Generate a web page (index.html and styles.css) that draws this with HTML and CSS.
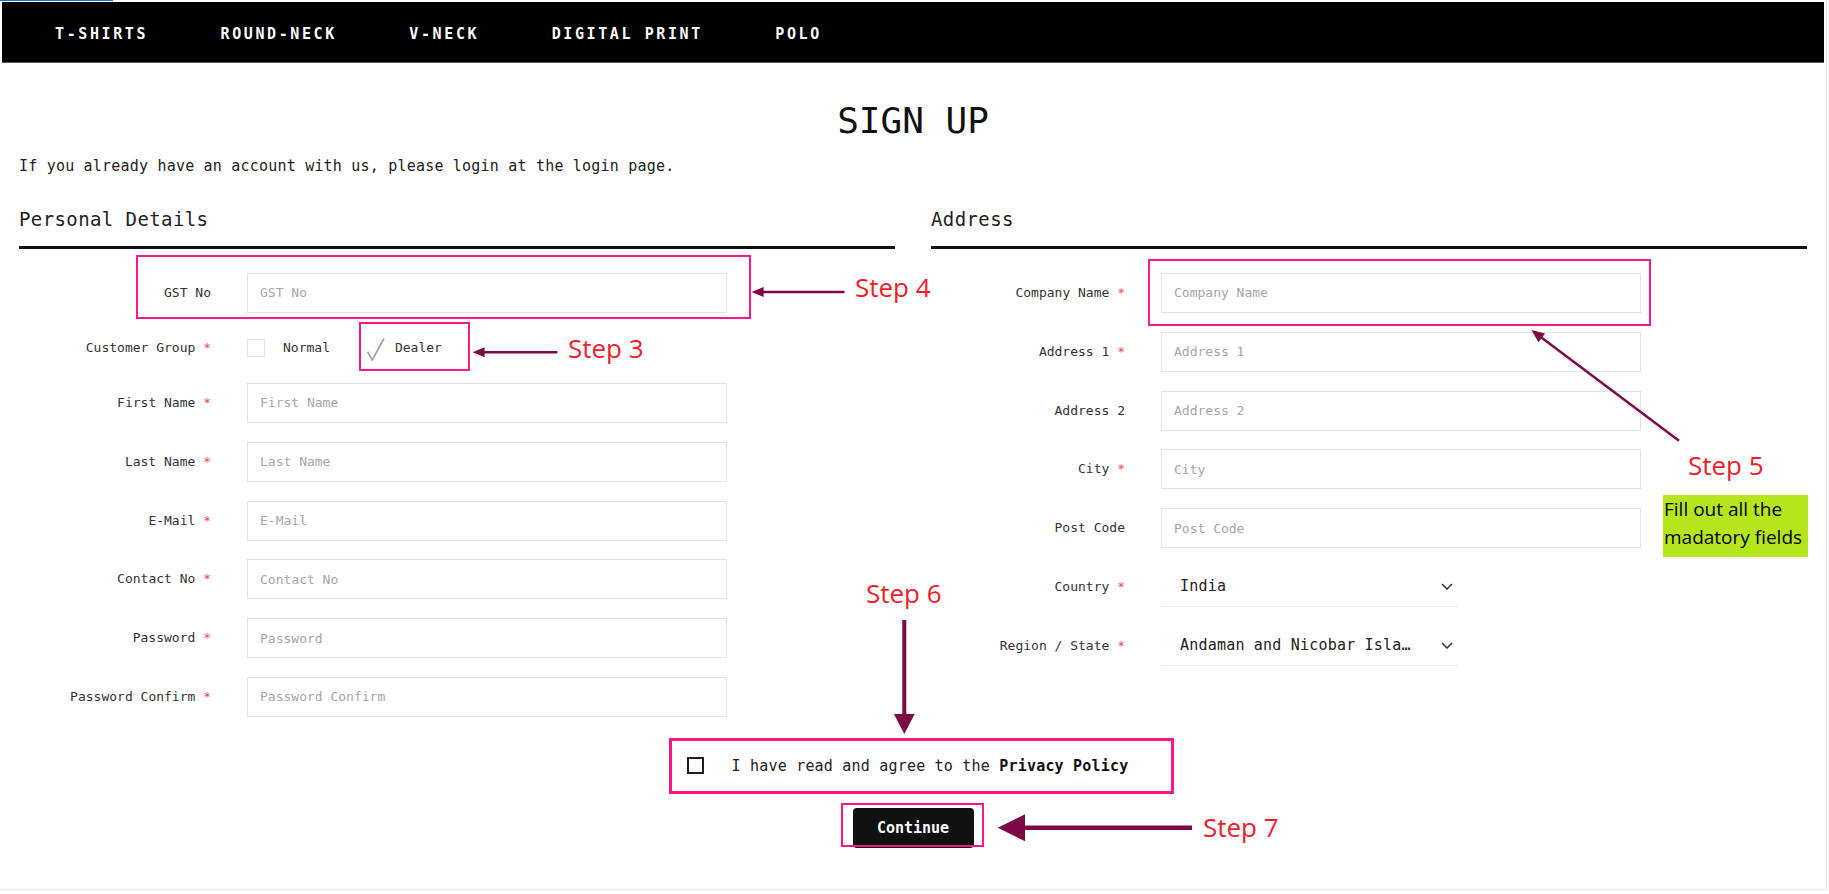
FILE: index.html
```html
<!DOCTYPE html>
<html lang="en">
<head>
<meta charset="utf-8">
<title>Sign Up</title>
<link rel="stylesheet" href="styles.css">
</head>
<body>
<div class="site">
  <div class="tabline"><span class="tab-indicator"></span></div>
  <nav class="menu">
    <a class="menu-item">T-SHIRTS</a>
    <a class="menu-item">ROUND-NECK</a>
    <a class="menu-item">V-NECK</a>
    <a class="menu-item">DIGITAL PRINT</a>
    <a class="menu-item">POLO</a>
  </nav>

  <main class="content">
    <h1 class="title">SIGN UP</h1>
    <p class="intro">If you already have an account with us, please login at the login page.</p>

    <div class="columns">
      <section class="col col-left">
        <h2 class="legend">Personal Details</h2>
        <div class="fields">
          <div class="field"><label class="lbl">GST No</label><input class="inp" placeholder="GST No"></div>
          <div class="field field-group"><label class="lbl">Customer Group <span class="req">*</span></label>
            <div class="choices">
              <span class="box"></span><span class="choice-text">Normal</span>
              <svg class="tick" width="18" height="23" viewBox="0 0 18 23"><path d="M0.5 13.7 L5.3 22 L17 0.5" fill="none" stroke="#a3a3a3" stroke-width="1.7"/></svg><span class="choice-text">Dealer</span>
            </div>
          </div>
          <div class="field"><label class="lbl">First Name <span class="req">*</span></label><input class="inp" placeholder="First Name"></div>
          <div class="field"><label class="lbl">Last Name <span class="req">*</span></label><input class="inp" placeholder="Last Name"></div>
          <div class="field"><label class="lbl">E-Mail <span class="req">*</span></label><input class="inp" placeholder="E-Mail"></div>
          <div class="field"><label class="lbl">Contact No <span class="req">*</span></label><input class="inp" placeholder="Contact No"></div>
          <div class="field"><label class="lbl">Password <span class="req">*</span></label><input class="inp" placeholder="Password"></div>
          <div class="field"><label class="lbl">Password Confirm <span class="req">*</span></label><input class="inp" placeholder="Password Confirm"></div>
        </div>
      </section>

      <section class="col col-right">
        <h2 class="legend">Address</h2>
        <div class="fields">
          <div class="field"><label class="lbl">Company Name <span class="req">*</span></label><input class="inp" placeholder="Company Name"></div>
          <div class="field"><label class="lbl">Address 1 <span class="req">*</span></label><input class="inp" placeholder="Address 1"></div>
          <div class="field"><label class="lbl">Address 2</label><input class="inp" placeholder="Address 2"></div>
          <div class="field"><label class="lbl">City <span class="req">*</span></label><input class="inp" placeholder="City"></div>
          <div class="field"><label class="lbl">Post Code</label><input class="inp" placeholder="Post Code"></div>
          <div class="field"><label class="lbl">Country <span class="req">*</span></label>
            <div class="sel"><span class="sel-text">India</span><svg class="chev" width="12" height="7" viewBox="0 0 12 7"><path d="M1 1 L6 6 L11 1" fill="none" stroke="#333" stroke-width="1.5"/></svg></div>
          </div>
          <div class="field"><label class="lbl">Region / State <span class="req">*</span></label>
            <div class="sel"><span class="sel-text">Andaman and Nicobar Isla…</span><svg class="chev" width="12" height="7" viewBox="0 0 12 7"><path d="M1 1 L6 6 L11 1" fill="none" stroke="#333" stroke-width="1.5"/></svg></div>
          </div>
        </div>
      </section>
    </div>

    <div class="agree">
      <span class="agree-box"></span>
      <span class="agree-text">I have read and agree to the <b>Privacy Policy</b></span>
    </div>
    <div class="actions"><button class="btn">Continue</button></div>
  </main>

  <!-- annotations -->
  <div class="hl hl-gst"></div>
  <div class="hl hl-dealer"></div>
  <div class="hl hl-company"></div>
  <div class="hl hl-agree"></div>
  <div class="hl hl-continue"></div>

  <svg class="arrow arrow-3" width="86" height="12" viewBox="0 0 86 12"><polygon points="0.6,6.3 12.6,1.3 12.6,11.3" fill="#7d0a46"/><line x1="11" y1="6.3" x2="85.4" y2="6.3" stroke="#7d0a46" stroke-width="2.5"/></svg>
  <svg class="arrow arrow-4" width="94" height="12" viewBox="0 0 94 12"><polygon points="0.6,6 12.6,1 12.6,11" fill="#7d0a46"/><line x1="11" y1="6" x2="93.5" y2="6" stroke="#7d0a46" stroke-width="2.5"/></svg>
  <svg class="arrow arrow-5" width="160" height="122" viewBox="0 0 160 122"><polygon points="6.4,6 20.1,9.4 13.5,18.2" fill="#7d0a46"/><line x1="15" y1="12.5" x2="154" y2="116.7" stroke="#7d0a46" stroke-width="2.5"/></svg>
  <svg class="arrow arrow-6" width="23" height="116" viewBox="0 0 23 116"><line x1="11.3" y1="1" x2="11.3" y2="97" stroke="#7d0a46" stroke-width="4"/><polygon points="0.9,95 21.7,95 11.3,115" fill="#7d0a46"/></svg>
  <svg class="arrow arrow-7" width="196" height="28" viewBox="0 0 196 28"><polygon points="0.8,13.7 28,0.3 28,27.2" fill="#7d0a46"/><line x1="26" y1="13.7" x2="195" y2="13.7" stroke="#7d0a46" stroke-width="4.5"/></svg>

  <span class="step step-3">Step 3</span>
  <span class="step step-4">Step 4</span>
  <span class="step step-5">Step 5</span>
  <span class="step step-6">Step 6</span>
  <span class="step step-7">Step 7</span>
  <div class="note">Fill out all the<br>madatory fields</div>
</div>
</body>
</html>
```

FILE: styles.css
```css
html, body {
  margin: 0;
  padding: 0;
  background: #fff;
}
body {
  width: 1829px;
  overflow: hidden;
  font-family: "DejaVu Sans Mono", "Liberation Mono", monospace;
  color: #222;
}
.site {
  position: relative;
  width: 1826px;
  height: 889px;
  border-right: 1px solid #e4e4e4;
  border-bottom: 1px solid #e6e6e6;
}
.tabline {
  height: 2px;
}
.tab-indicator {
  display: block;
  width: 113px;
  height: 1px;
  background: #1a78d6;
}
.menu {
  display: flex;
  align-items: center;
  gap: 72.5px;
  height: 57px;
  padding: 3px 0 0 53px;
  margin: 0 2px;
  background: #000;
  border-bottom: 1px solid #5a5a5a;
}
.menu-item {
  color: #fff;
  font-size: 15px;
  font-weight: bold;
  letter-spacing: 2.6px;
  line-height: 18px;
}
.content {
  padding: 0 19px;
}
.title {
  margin: 36.5px 0 0;
  font-size: 36px;
  line-height: 42px;
  font-weight: normal;
  text-align: center;
  color: #111;
}
.intro {
  margin: 15.3px 0 0;
  font-size: 15px;
  line-height: 18px;
  letter-spacing: 0.2px;
  color: #222;
}
.columns {
  display: grid;
  grid-template-columns: 876px 876px;
  column-gap: 36px;
  margin-top: 32.3px;
}
.legend {
  margin: 0;
  font-size: 19px;
  line-height: 24px;
  letter-spacing: 0.4px;
  font-weight: normal;
  color: #222;
  padding-bottom: 14.6px;
  border-bottom: 3px solid #111;
}
.fields {
  display: flex;
  flex-direction: column;
  gap: 18.8px;
  margin-top: 24.3px;
}
.field {
  display: grid;
  grid-template-columns: 192px 480px;
  column-gap: 36px;
  align-items: center;
  height: 40px;
}
.col-right .field {
  grid-template-columns: 194px 480px;
}
.field-group {
  height: 32.4px;
}
.lbl {
  text-align: right;
  font-size: 13px;
  line-height: 16px;
  color: #333;
}
.req {
  color: #ef4a4f;
}
.inp {
  box-sizing: border-box;
  width: 100%;
  height: 40px;
  margin: 0;
  padding: 0 12px;
  border: 1px solid #e3e3e3;
  border-radius: 0;
  font-family: "DejaVu Sans Mono", "Liberation Mono", monospace;
  font-size: 13px;
  color: #333;
  background: #fff;
  outline: none;
}
.inp::placeholder {
  color: #a6a6a6;
}
.choices {
  display: flex;
  align-items: center;
}
.box {
  box-sizing: border-box;
  width: 18px;
  height: 18px;
  border: 1px solid #e2e2e2;
  margin-right: 18px;
}
.choice-text {
  font-size: 13px;
  color: #333;
  line-height: 16px;
}
.tick {
  margin-left: 37px;
  margin-right: 10px;
  margin-top: 3px;
}
.sel {
  box-sizing: border-box;
  display: flex;
  align-items: center;
  width: 298px;
  height: 40px;
  padding: 0 6px 0 19px;
  border-bottom: 1px solid #e8e8e8;
}
.sel-text {
  white-space: nowrap;
  font-size: 15px;
  letter-spacing: 0.2px;
  color: #222;
}
.chev {
  margin-left: auto;
}
.agree {
  display: flex;
  align-items: center;
  justify-content: center;
  height: 40px;
  margin-top: 29px;
  padding-right: 11px;
}
.agree-box {
  box-sizing: border-box;
  width: 17px;
  height: 17px;
  border: 2px solid #1e1e1e;
  margin-right: 28px;
}
.agree-text {
  font-size: 15px;
  letter-spacing: 0.2px;
  color: #222;
}
.agree-text b {
  color: #111;
}
.actions {
  display: flex;
  justify-content: center;
  margin-top: 22.3px;
}
.btn {
  width: 121px;
  height: 40px;
  padding: 0;
  border: 0;
  border-radius: 4px;
  background: #111;
  color: #fff;
  font-family: "DejaVu Sans Mono", "Liberation Mono", monospace;
  font-size: 15px;
  font-weight: bold;
}

/* annotation overlays */
.hl {
  position: absolute;
  box-sizing: border-box;
  border: 2px solid #fe1786;
}
.hl-gst { left: 136px; top: 255px; width: 615px; height: 64px; }
.hl-dealer { left: 359px; top: 322px; width: 111px; height: 49px; }
.hl-company { left: 1148px; top: 259px; width: 503px; height: 67px; }
.hl-agree { left: 669px; top: 738px; width: 505px; height: 56px; border-width: 3px; }
.hl-continue { left: 841px; top: 803px; width: 143px; height: 44px; }

.arrow { position: absolute; overflow: visible; }
.arrow-3 { left: 472px; top: 346px; }
.arrow-4 { left: 751px; top: 285.7px; }
.arrow-5 { left: 1525px; top: 324px; }
.arrow-6 { left: 893px; top: 619px; }
.arrow-7 { left: 997px; top: 814px; }

.step {
  position: absolute;
  font-family: "Open Sans", "Noto Sans", sans-serif;
  font-size: 26px;
  line-height: 26px;
  color: #f0202a;
  white-space: nowrap;
}
.step-3 { left: 568px; top: 334.5px; }
.step-4 { left: 855px; top: 273.6px; }
.step-5 { left: 1688px; top: 452px; }
.step-6 { left: 866px; top: 580.2px; }
.step-7 { left: 1203px; top: 814px; }

.note {
  position: absolute;
  left: 1663px;
  top: 495px;
  box-sizing: border-box;
  width: 145px;
  height: 62px;
  padding-left: 1px;
  background: #b5e61d;
  font-family: "Open Sans", "Noto Sans", sans-serif;
  font-size: 19px;
  line-height: 28px;
  color: #000;
  white-space: nowrap;
}
```
